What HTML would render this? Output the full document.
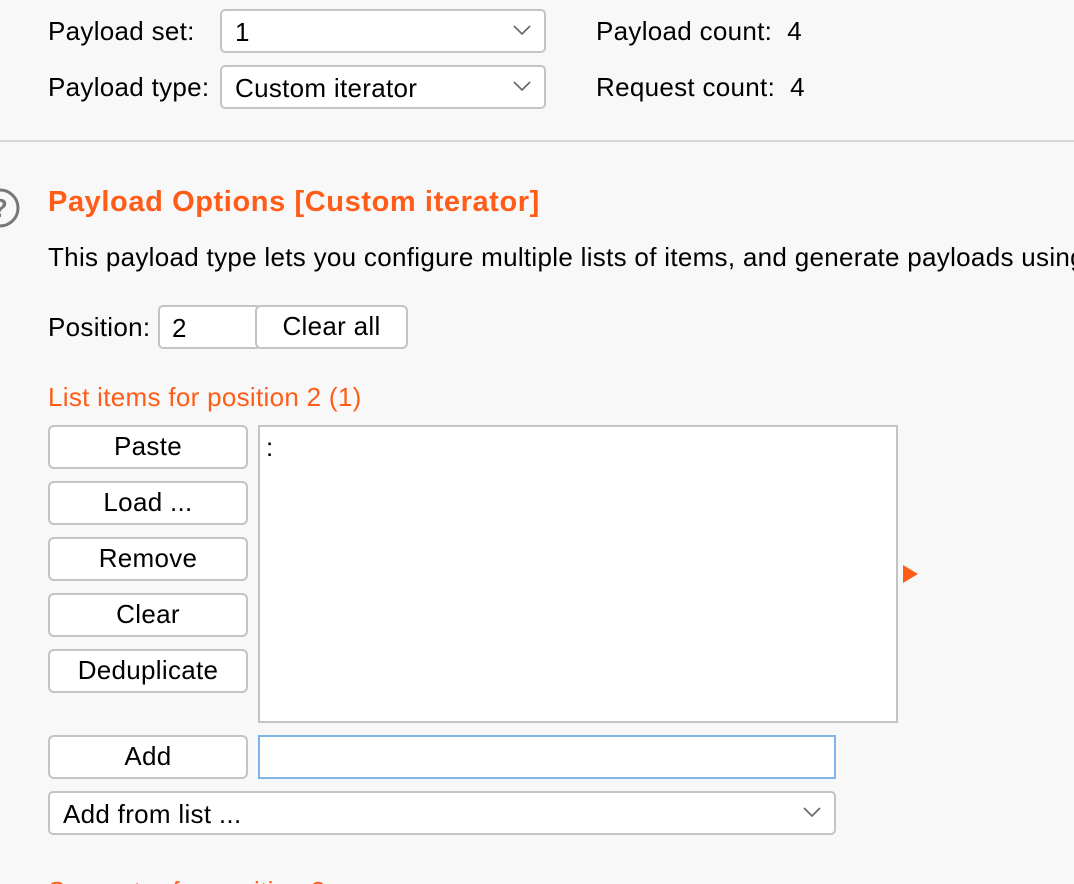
<!DOCTYPE html><html><head><style>
html,body{margin:0;width:1074px;height:884px;overflow:hidden}
body{background:#f8f8f8;font-family:"Liberation Sans",sans-serif;font-size:26px;letter-spacing:0.3px;color:#000;position:relative}
.a{position:absolute;white-space:nowrap}
.box{position:absolute;background:#fff;border:2px solid #c4c4c4;border-radius:5px;box-sizing:border-box}
.btn{position:absolute;background:#fff;border:2px solid #c4c4c4;border-radius:6px;box-sizing:border-box;text-align:center;line-height:39px}
.chev{position:absolute;right:12px;top:12px}
.t{line-height:30px}
.or{color:#ff5c17}
</style></head><body>
<div class="a t" style="left:48px;top:16px">Payload set:</div>
<div class="box" style="left:220px;top:9px;width:326px;height:44px"><span class="a t" style="left:13px;top:6px">1</span><svg class="chev" width="20" height="14"><path d="M2 3l8 8 8-8" fill="none" stroke="#666" stroke-width="1.6"/></svg></div>
<div class="a t" style="left:596px;top:16px">Payload count:&nbsp; 4</div>
<div class="a t" style="left:48px;top:72px">Payload type:</div>
<div class="box" style="left:220px;top:65px;width:326px;height:44px"><span class="a t" style="left:13px;top:6px">Custom iterator</span><svg class="chev" width="20" height="14"><path d="M2 3l8 8 8-8" fill="none" stroke="#666" stroke-width="1.6"/></svg></div>
<div class="a t" style="left:596px;top:72px">Request count:&nbsp; 4</div>
<div class="a" style="left:0;top:140px;width:1074px;height:2px;background:#d6d6d6"></div>
<svg class="a" style="left:-14px;top:186px" width="36" height="44"><circle cx="14" cy="22" r="18" fill="none" stroke="#777" stroke-width="3"/><text x="14" y="31" font-family="Liberation Sans" font-size="26" font-weight="bold" fill="#777" text-anchor="middle">?</text></svg>
<div class="a or" style="left:48px;top:185px;font-size:29px;letter-spacing:0.6px;font-weight:bold;line-height:34px">Payload Options [Custom iterator]</div>
<div class="a t" style="left:48px;top:242px">This payload type lets you configure multiple lists of items, and generate payloads using</div>
<div class="a t" style="left:48px;top:312px">Position:</div>
<div class="box" style="left:158px;top:305px;width:104px;height:44px"><span class="a t" style="left:12px;top:6px">2</span></div>
<div class="btn" style="left:255px;top:305px;width:153px;height:44px">Clear all</div>
<div class="a t or" style="left:48px;top:382px">List items for position 2 (1)</div>
<div class="btn" style="left:48px;top:425px;width:200px;height:44px">Paste</div>
<div class="btn" style="left:48px;top:481px;width:200px;height:44px">Load ...</div>
<div class="btn" style="left:48px;top:537px;width:200px;height:44px">Remove</div>
<div class="btn" style="left:48px;top:593px;width:200px;height:44px">Clear</div>
<div class="btn" style="left:48px;top:649px;width:200px;height:44px">Deduplicate</div>
<div class="a" style="left:258px;top:425px;width:640px;height:298px;background:#fff;border:2px solid #c4c4c4;box-sizing:border-box"><span class="a t" style="left:6px;top:5px">:</span></div>
<svg class="a" style="left:902px;top:564px" width="18" height="20"><path d="M1 1L16 10L1 19Z" fill="#ff5c17"/></svg>
<div class="btn" style="left:48px;top:735px;width:200px;height:44px">Add</div>
<div class="a" style="left:258px;top:735px;width:578px;height:44px;background:#fff;border:2px solid #7fb4e6;box-sizing:border-box"></div>
<div class="box" style="left:48px;top:791px;width:788px;height:44px"><span class="a t" style="left:13px;top:6px">Add from list ...</span><svg class="chev" width="20" height="14"><path d="M2 3l8 8 8-8" fill="none" stroke="#666" stroke-width="1.6"/></svg></div>
<div class="a t or" style="left:48px;top:876px">Separator for position 2</div>
</body></html>
